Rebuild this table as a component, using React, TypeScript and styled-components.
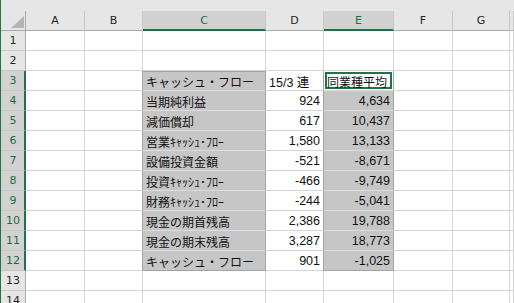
import * as React from 'react';
import styled, { createGlobalStyle } from 'styled-components';

const GREEN = '#217346';
const GRID = '#d4d4d4';
const OUTLINE = '#a3a3a3';
const TINT = '#c6c6c6';
const TINT_LINE = '#dcdcdc';

const GlobalStyle = createGlobalStyle`
  html, body { margin: 0; padding: 0; background: #fff; overflow: hidden; }
  body { font-family: "Liberation Sans", "Noto Sans CJK JP", sans-serif; }
`;

const Window = styled.div`
  width: 514px;
  height: 303px;
  overflow: hidden;
  border-left: 1px solid ${GREEN};
  box-sizing: border-box;
`;

const Sheet = styled.div`
  display: grid;
  grid-template-columns: 25px 59px 58px 123px 58px 70px 59px 57px 1fr;
  grid-template-rows: 11px 20px repeat(14, 20px);
`;

const TopStrip = styled.div`
  grid-column: 1 / -1;
  background: #e6e6e6;
`;

const Corner = styled.div`
  box-sizing: border-box;
  background: #e6e6e6;
  border-right: 1px solid #ababab;
  border-bottom: 1px solid #ababab;
  display: flex;
  align-items: flex-end;
  justify-content: flex-end;
  padding: 0 1px 2px 0;
`;

const Triangle = styled.div`
  width: 0;
  height: 0;
  border-left: 13px solid transparent;
  border-bottom: 12px solid #b4b4b4;
`;

const ColHeader = styled.div<{ $sel?: boolean }>`
  box-sizing: border-box;
  background: ${p => (p.$sel ? '#d2d2d2' : '#e6e6e6')};
  border-right: 1px solid #c8c8c8;
  border-bottom: ${p => (p.$sel ? `2px solid ${GREEN}` : '1px solid #ababab')};
  color: ${p => (p.$sel ? '#1d6b40' : '#262626')};
  font-family: "DejaVu Sans", sans-serif;
  font-size: 11px;
  display: flex;
  align-items: center;
  justify-content: center;
  padding-top: ${p => (p.$sel ? '1px' : '0')};
`;

const RowHeader = styled.div<{ $sel?: boolean }>`
  box-sizing: border-box;
  background: ${p => (p.$sel ? '#d2d2d2' : '#e6e6e6')};
  border-right: ${p => (p.$sel ? `2px solid ${GREEN}` : '1px solid #ababab')};
  border-bottom: 1px solid #c8c8c8;
  color: ${p => (p.$sel ? '#1d6b40' : '#262626')};
  font-family: "DejaVu Sans", sans-serif;
  font-size: 11px;
  display: flex;
  align-items: center;
  justify-content: center;
  padding-left: ${p => (p.$sel ? '1px' : '0')};
`;

type CellProps = {
  $fill?: boolean;
  $right?: string;
  $bottom?: string;
  $top?: boolean;
  $num?: boolean;
  $active?: boolean;
  $size?: number;
};

const Cell = styled.div<CellProps>`
  box-sizing: border-box;
  background: ${p => (p.$fill ? TINT : '#fff')};
  border-right: 1px solid ${p => p.$right || GRID};
  border-bottom: 1px solid ${p => p.$bottom || GRID};
  box-shadow: ${p =>
    p.$active
      ? `inset 0 0 0 1px #fff, inset 0 0 0 3px ${GREEN}`
      : p.$top
      ? `inset 0 1px 0 ${OUTLINE}`
      : 'none'};
  display: flex;
  align-items: center;
  justify-content: ${p => (p.$num ? 'flex-end' : 'flex-start')};
  padding: 1px ${p => (p.$num ? '3px' : '0')} 0 3px;
  font-size: ${p => p.$size || 12}px;
  color: #111;
  white-space: nowrap;
  overflow: hidden;
`;

const COLS = ['A', 'B', 'C', 'D', 'E', 'F', 'G', ''];
const SEL_COLS = ['C', 'E'];

const DATA: [string, string, string][] = [
  ['キャッシュ・フロー', '15/3 連', '同業種平均'],
  ['当期純利益', '924', '4,634'],
  ['減価償却', '617', '10,437'],
  ['営業ｷｬｯｼｭ･ﾌﾛｰ', '1,580', '13,133'],
  ['設備投資金額', '-521', '-8,671'],
  ['投資ｷｬｯｼｭ･ﾌﾛｰ', '-466', '-9,749'],
  ['財務ｷｬｯｼｭ･ﾌﾛｰ', '-244', '-5,041'],
  ['現金の期首残高', '2,386', '19,788'],
  ['現金の期末残高', '3,287', '18,773'],
  ['キャッシュ・フロー', '901', '-1,025'],
];

const inTable = (r: number) => r >= 3 && r <= 12;

function renderCell(r: number, col: string) {
  const key = `${col}${r}`;
  const row = inTable(r) ? DATA[r - 3] : null;

  if (col === 'B') {
    return <Cell key={key} $right={row ? OUTLINE : undefined} />;
  }
  if (col === 'C') {
    return (
      <Cell
        key={key}
        $fill={!!row}
        $top={r === 3}
        $right={row ? OUTLINE : undefined}
        $bottom={r === 12 ? OUTLINE : row && r < 12 ? TINT_LINE : undefined}
      >
        {row ? row[0] : null}
      </Cell>
    );
  }
  if (col === 'D') {
    return (
      <Cell key={key} $num={r > 3} $size={12.5} $right={row ? OUTLINE : undefined}>
        {row ? row[1] : null}
      </Cell>
    );
  }
  if (col === 'E') {
    const active = r === 3;
    return (
      <Cell
        key={key}
        $fill={!!row && !active}
        $active={active}
        $num={r > 3}
        $size={active ? 12 : 12.5}
        $right={row ? OUTLINE : undefined}
        $bottom={r === 12 ? OUTLINE : row && r < 12 ? TINT_LINE : undefined}
      >
        {row ? row[2] : null}
      </Cell>
    );
  }
  return <Cell key={key} />;
}

export default function App() {
  const rows = Array.from({ length: 14 }, (_, i) => i + 1);
  return (
    <Window>
      <GlobalStyle />
      <Sheet>
        <TopStrip />
        <Corner>
          <Triangle />
        </Corner>
        {COLS.map(c => (
          <ColHeader key={`h${c}`} $sel={SEL_COLS.includes(c)}>
            {c}
          </ColHeader>
        ))}
        {rows.map(r => (
          <React.Fragment key={r}>
            <RowHeader $sel={inTable(r)}>{r}</RowHeader>
            {COLS.map(c => renderCell(r, c || 'H'))}
          </React.Fragment>
        ))}
      </Sheet>
    </Window>
  );
}
